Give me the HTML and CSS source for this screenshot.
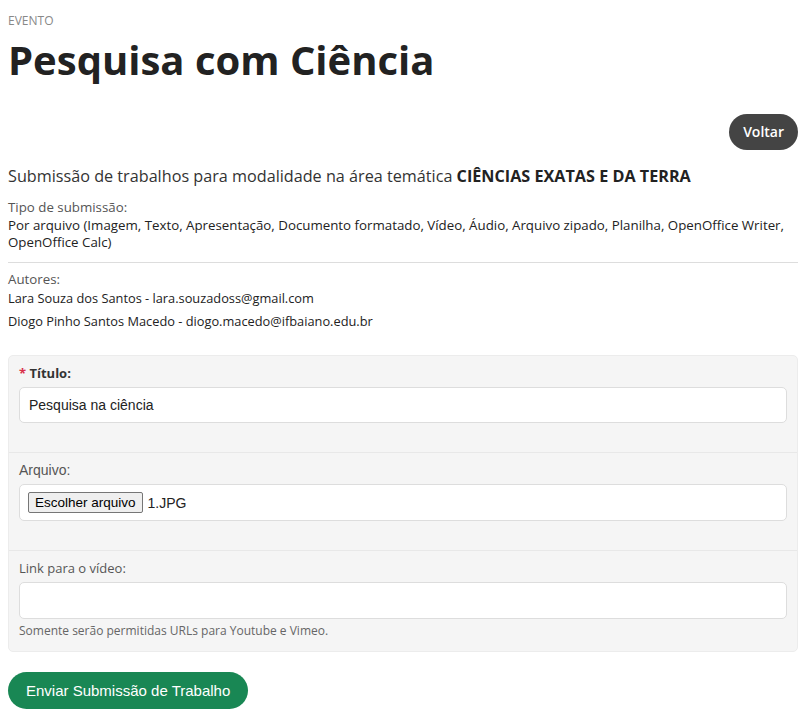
FILE: index.html
```html
<!DOCTYPE html>
<html lang="pt-BR">
<head>
    <meta charset="UTF-8">
    <meta name="viewport" content="width=device-width, initial-scale=1.0">
    <title>Pesquisa com Ciência - Submissão</title>
    <link rel="stylesheet" href="styles.css">
</head>
<body>
    <div class="page">
        <div class="page-header">
            <span class="kicker">EVENTO</span>
            <h1>Pesquisa com Ciência</h1>
        </div>

        <div class="actions">
            <a href="#" class="btn-back">Voltar</a>
        </div>

        <h2 class="subtitle">Submissão de trabalhos para modalidade na área temática <strong>CIÊNCIAS EXATAS E DA TERRA</strong></h2>

        <div class="info info-type">
            <span class="info-label">Tipo de submissão:</span>
            <p>Por arquivo (Imagem, Texto, Apresentação, Documento formatado, Vídeo, Áudio, Arquivo zipado, Planilha, OpenOffice Writer, OpenOffice Calc)</p>
        </div>

        <hr>

        <div class="info">
            <span class="info-label">Autores:</span>
            <ul class="authors">
                <li>Lara Souza dos Santos - lara.souzadoss@gmail.com</li>
                <li>Diogo Pinho Santos Macedo - diogo.macedo@ifbaiano.edu.br</li>
            </ul>
        </div>

        <form class="panel">
            <div class="panel-section">
                <label for="titulo" class="label-required"><span class="req">*</span> Título:</label>
                <input type="text" id="titulo" class="field field-sm" value="Pesquisa na ciência">
            </div>

            <div class="panel-section">
                <label class="label-plain">Arquivo:</label>
                <div class="field file-field">
                    <button type="button" class="file-btn">Escolher arquivo</button>
                    <span class="file-name">1.JPG</span>
                </div>
            </div>

            <div class="panel-section last">
                <label for="video">Link para o vídeo:</label>
                <input type="text" id="video" class="field">
                <small class="help">Somente serão permitidas URLs para Youtube e Vimeo.</small>
            </div>
        </form>

        <button type="submit" class="btn-submit">Enviar Submissão de Trabalho</button>
    </div>
</body>
</html>
```

FILE: styles.css
```css
* {
    margin: 0;
    padding: 0;
    box-sizing: border-box;
}

body {
    font-family: 'Open Sans', 'Liberation Sans', Arial, sans-serif;
    color: #222;
    background: #fff;
}

.page {
    padding: 12px 12px 0 8px;
}

.kicker {
    display: block;
    font-size: 12px;
    line-height: 17px;
    color: #888;
}

.page-header h1 {
    font-size: 40px;
    font-weight: 700;
    line-height: 48px;
    color: #222;
    margin-top: 7px;
}

.actions {
    display: flex;
    justify-content: flex-end;
    margin-top: 30px;
}

.btn-back {
    display: inline-block;
    background: #444;
    color: #fff;
    text-decoration: none;
    font-size: 14px;
    font-weight: 600;
    line-height: 20px;
    padding: 8px 14px;
    border-radius: 18px;
}

.subtitle {
    font-size: 16.2px;
    font-weight: 400;
    line-height: 22px;
    color: #333;
    margin-top: 15px;
}

.subtitle strong {
    font-weight: 700;
    color: #222;
}

.info {
    font-size: 13.3px;
    line-height: 17px;
}

.info-type {
    margin-top: 11px;
}

.info-label {
    display: block;
    color: #555;
    line-height: 19px;
}

.info p {
    color: #222;
}

hr {
    border: none;
    border-top: 1px solid #ddd;
    margin: 11px 0 7px;
}

.authors {
    list-style: none;
    color: #222;
    font-size: 12.8px;
}

.authors li {
    line-height: 18px;
    margin-bottom: 5px;
}

.panel {
    margin-top: 25px;
    background: #f5f5f5;
    border: 1px solid #ececec;
    border-radius: 5px;
}

.panel-section {
    padding: 7px 10px 29px;
    border-bottom: 1px solid #e8e8e8;
}

.panel-section.last {
    border-bottom: none;
    padding-bottom: 12px;
}

.panel-section label {
    display: block;
    font-size: 13px;
    line-height: 20px;
    color: #555;
    margin-bottom: 4px;
}

.panel-section .label-required {
    font-weight: 700;
    color: #333;
}

.req {
    color: #d9304a;
}

.panel-section .label-plain {
    font-family: 'Liberation Sans', Arial, sans-serif;
    font-size: 14px;
}

.field {
    display: block;
    width: 100%;
    height: 37px;
    background: #fff;
    border: 1px solid #ddd;
    border-radius: 5px;
    padding: 0 9px;
    font-family: 'Liberation Sans', Arial, sans-serif;
    font-size: 14px;
    color: #222;
}

.field-sm {
    height: 36px;
}

.field:focus {
    outline: none;
    border-color: #aaa;
}

.file-field {
    display: flex;
    align-items: center;
    gap: 5px;
    padding: 0 8px;
}

.file-btn {
    font-family: 'Liberation Sans', Arial, sans-serif;
    font-size: 13.5px;
    color: #000;
    background: #efefef;
    border: 1px solid #767676;
    border-radius: 2px;
    padding: 1px 6px;
    height: 21px;
}

.file-name {
    font-size: 14px;
    color: #222;
}

.help {
    display: block;
    font-size: 12px;
    line-height: 16px;
    color: #666;
    margin-top: 4px;
}

.btn-submit {
    margin-top: 20px;
    background: #198754;
    color: #fff;
    border: none;
    border-radius: 19px;
    font-family: 'Liberation Sans', Arial, sans-serif;
    font-size: 15px;
    line-height: 20px;
    padding: 9px 18px 8px;
    cursor: pointer;
}
```
